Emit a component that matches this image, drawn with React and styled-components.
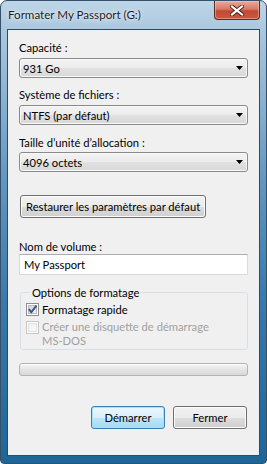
import React from 'react';
import styled, { createGlobalStyle } from 'styled-components';

const GlobalStyle = createGlobalStyle`
  html, body {
    margin: 0;
    padding: 0;
    background: #ffffff;
  }
  body {
    font-family: Lato, "Liberation Sans", sans-serif;
    font-size: 11.2px;
    color: #000;
  }
`;

const Window = styled.div`
  width: 267px;
  height: 464px;
  box-sizing: border-box;
  display: flex;
  flex-direction: column;
  border: 1px solid #34506a;
  border-radius: 7px 7px 4px 4px;
  overflow: hidden;
  background: linear-gradient(
    180deg,
    #bed5e8 0%,
    #a9c6dd 7%,
    #8db4d2 20%,
    #5f95c0 40%,
    #3a79aa 65%,
    #1f6698 100%
  );
`;

const TitleBar = styled.div`
  height: 28px;
  flex: none;
  display: flex;
  justify-content: space-between;
  align-items: flex-start;
`;

const Title = styled.div`
  padding: 6px 0 0 7px;
  line-height: 15px;
  font-size: 11.6px;
  color: #1b1b1b;
  text-shadow: 0 0 6px rgba(255, 255, 255, 0.9), 0 0 2px rgba(255, 255, 255, 0.8);
`;

const CloseButton = styled.div`
  width: 46px;
  height: 19px;
  margin-right: 6px;
  box-sizing: border-box;
  border: 1px solid #5b2a22;
  border-top: none;
  border-radius: 0 0 4px 4px;
  background: linear-gradient(180deg, #e9a99b 0%, #d77a68 45%, #c24a33 55%, #c9583e 100%);
  box-shadow: inset 0 0 0 1px rgba(255, 210, 200, 0.45);
  display: flex;
  align-items: center;
  justify-content: center;
`;

const Client = styled.div`
  flex: 1;
  margin: 0 6px 7px 6px;
  border: 1px solid #2e4b64;
  background: #f0f0f0;
  padding: 10px 11px 0 11px;
  display: flex;
  flex-direction: column;
`;

const Label = styled.div`
  line-height: 15px;
  margin-top: ${p => p.$top || 0}px;
  margin-bottom: ${p => (p.$gap === undefined ? 3 : p.$gap)}px;
`;

const Combo = styled.div`
  height: 20px;
  box-sizing: border-box;
  border: 1px solid #8a8a8a;
  border-radius: 3px;
  background: linear-gradient(180deg, #f3f3f3 0%, #ececec 50%, #e1e1e1 51%, #d8d8d8 100%);
  box-shadow: inset 0 0 0 1px #f8f8f8;
  display: flex;
  align-items: center;
  justify-content: space-between;
  padding: 0 4px 0 3px;
  line-height: 15px;
`;

const Button = styled.div`
  height: 23px;
  box-sizing: border-box;
  width: ${p => (p.$width ? `${p.$width}px` : 'auto')};
  align-self: ${p => (p.$width ? 'auto' : 'flex-start')};
  padding: 0 ${p => (p.$width ? 0 : 5)}px;
  margin-top: ${p => p.$top || 0}px;
  margin-left: ${p => (p.$width ? 0 : 1)}px;
  border: 1px solid ${p => (p.$default ? '#3c7fb1' : '#707070')};
  border-radius: 3px;
  background: ${p =>
    p.$default
      ? 'linear-gradient(180deg, #eaf6fd 0%, #d9f0fc 50%, #bee6fd 51%, #a7d9f5 100%)'
      : 'linear-gradient(180deg, #f2f2f2 0%, #ebebeb 50%, #dddddd 51%, #cfcfcf 100%)'};
  box-shadow: inset 0 0 0 1px ${p => (p.$default ? '#9ee3fb' : '#fbfbfb')};
  display: flex;
  align-items: center;
  justify-content: center;
  line-height: 15px;
  white-space: nowrap;
`;

const TextBox = styled.div`
  height: 21px;
  box-sizing: border-box;
  border: 1px solid #d6dadf;
  border-top-color: #abadb3;
  background: #fff;
  padding: 0 4px;
  display: flex;
  align-items: center;
  line-height: 15px;
`;

const Group = styled.fieldset`
  margin: 10px 0 0 1px;
  padding: 2px 5px 1px 5px;
  border: 1px solid #d5dfe5;
  border-radius: 3px;
  min-width: 0;
`;

const Legend = styled.legend`
  padding: 0 2px;
  margin-left: 4px;
  line-height: 15px;
`;

const CheckRow = styled.div`
  display: flex;
  align-items: flex-start;
  gap: 3px;
  margin-top: ${p => p.$top || 0}px;
  color: ${p => (p.$disabled ? '#a0a0a0' : '#000')};
`;

const CheckText = styled.div`
  line-height: ${p => (p.$disabled ? 14 : 15)}px;
`;

const Progress = styled.div`
  margin-top: 13px;
  height: 13px;
  box-sizing: border-box;
  border: 1px solid #b2b2b2;
  border-radius: 3px;
  background: linear-gradient(180deg, #f5f5f5 0%, #e6e6e6 45%, #d9d9d9 100%);
  box-shadow: inset 0 1px 0 #fdfdfd;
`;

const Actions = styled.div`
  margin-top: 30px;
  display: flex;
  justify-content: flex-end;
  gap: 8px;
  padding-right: 1px;
`;

const Arrow = () => (
  <svg width="7" height="4" viewBox="0 0 7 4">
    <polygon points="0,0 7,0 3.5,4" fill="#000" />
  </svg>
);

const CloseGlyph = () => (
  <svg width="14" height="11" viewBox="0 0 14 11">
    <path d="M2 1.5 L12 9.5 M12 1.5 L2 9.5" stroke="#4a1e16" strokeWidth="4" strokeLinecap="square" />
    <path d="M2 1.5 L12 9.5 M12 1.5 L2 9.5" stroke="#ffffff" strokeWidth="2.2" strokeLinecap="square" />
  </svg>
);

const CheckBox = ({ checked, disabled }) => (
  <svg width="13" height="13" viewBox="0 0 13 13" style={{ flex: 'none', marginTop: 1 }}>
    <defs>
      <linearGradient id={disabled ? 'cbd' : 'cbn'} x1="0" y1="0" x2="1" y2="1">
        <stop offset="0" stopColor={disabled ? '#f0f0f0' : '#cbcfd5'} />
        <stop offset="1" stopColor={disabled ? '#fafafa' : '#f6f6f6'} />
      </linearGradient>
    </defs>
    <rect x="0.5" y="0.5" width="12" height="12" fill="#fdfdfd" stroke={disabled ? '#c7c7c7' : '#8e8f8f'} />
    <rect x="2.5" y="2.5" width="8" height="8" fill={`url(#${disabled ? 'cbd' : 'cbn'})`} stroke={disabled ? '#e3e3e3' : '#b8bcc2'} />
    {checked && (
      <path d="M2.8 6.2 L5.3 9.2 L10.5 2.6" stroke="#3d5487" strokeWidth="1.9" fill="none" />
    )}
  </svg>
);

export default function App() {
  return (
    <>
      <GlobalStyle />
      <Window>
        <TitleBar>
          <Title>Formater My Passport (G:)</Title>
          <CloseButton>
            <CloseGlyph />
          </CloseButton>
        </TitleBar>
        <Client>
          <Label>Capacité :</Label>
          <Combo>
            <span>931 Go</span>
            <Arrow />
          </Combo>

          <Label $top={9}>Système de fichiers :</Label>
          <Combo>
            <span>NTFS (par défaut)</span>
            <Arrow />
          </Combo>

          <Label $top={10} $gap={2}>Taille d’unité d’allocation :</Label>
          <Combo>
            <span>4096 octets</span>
            <Arrow />
          </Combo>

          <Button $top={23}>Restaurer les paramètres par défaut</Button>

          <Label $top={21} $gap={0}>Nom de volume :</Label>
          <TextBox>My Passport</TextBox>

          <Group>
            <Legend>Options de formatage</Legend>
            <CheckRow>
              <CheckBox checked />
              <CheckText>Formatage rapide</CheckText>
            </CheckRow>
            <CheckRow $top={3} $disabled>
              <CheckBox disabled />
              <CheckText $disabled>
                Créer une disquette de démarrage
                <br />
                MS-DOS
              </CheckText>
            </CheckRow>
          </Group>

          <Progress />

          <Actions>
            <Button $width={74} $default>Démarrer</Button>
            <Button $width={74}>Fermer</Button>
          </Actions>
        </Client>
      </Window>
    </>
  );
}
